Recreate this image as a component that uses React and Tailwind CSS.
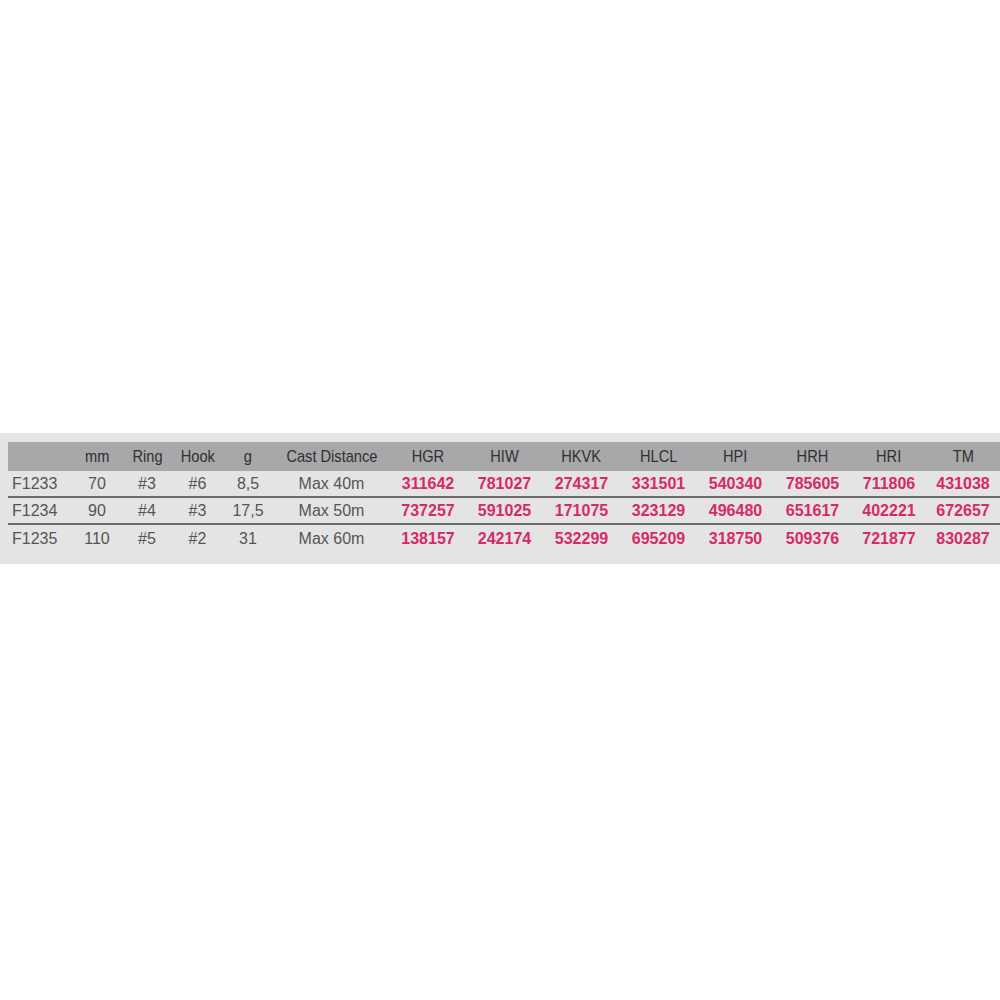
const columns = ['', 'mm', 'Ring', 'Hook', 'g', 'Cast Distance', 'HGR', 'HIW', 'HKVK', 'HLCL', 'HPI', 'HRH', 'HRI', 'TM']

const rows = [
  ['F1233', '70', '#3', '#6', '8,5', 'Max 40m', '311642', '781027', '274317', '331501', '540340', '785605', '711806', '431038'],
  ['F1234', '90', '#4', '#3', '17,5', 'Max 50m', '737257', '591025', '171075', '323129', '496480', '651617', '402221', '672657'],
  ['F1235', '110', '#5', '#2', '31', 'Max 60m', '138157', '242174', '532299', '695209', '318750', '509376', '721877', '830287'],
]

const grid = 'grid grid-cols-[64px_50px_50px_51px_50px_117px_76px_77px_77px_77px_77px_77px_76px_72px]'

export default function App() {
  return (
    <div className="w-[1000px] h-[1000px] bg-white flex flex-col">
      <div className="mt-[433px] h-[131px] bg-[#e4e4e4] pl-2 pt-[9px]">
        <div className={`${grid} h-[29px] items-center bg-[#a8a8aa] text-[#303030] text-[17px] font-['Liberation_Sans',sans-serif]`}>
          {columns.map((c, i) => (
            <div key={i} className="flex justify-center">
              <span className="inline-block scale-x-[0.86] whitespace-nowrap">{c}</span>
            </div>
          ))}
        </div>
        {rows.map((r, ri) => (
          <div
            key={ri}
            className={`${grid} h-[27px] items-center ${ri < 2 ? 'border-b-2 border-[#6a6a6a]' : ''}`}
          >
            {r.map((v, i) => (
              <div
                key={i}
                className={
                  i === 0
                    ? "pl-1 text-[16px] text-[#555] font-['Liberation_Sans',sans-serif]"
                    : i < 6
                    ? "text-center text-[16px] text-[#555] font-['Liberation_Sans',sans-serif]"
                    : "text-center text-[16px] font-bold text-[#d62a68] font-['Liberation_Sans',sans-serif]"
                }
              >
                {v}
              </div>
            ))}
          </div>
        ))}
      </div>
    </div>
  )
}
